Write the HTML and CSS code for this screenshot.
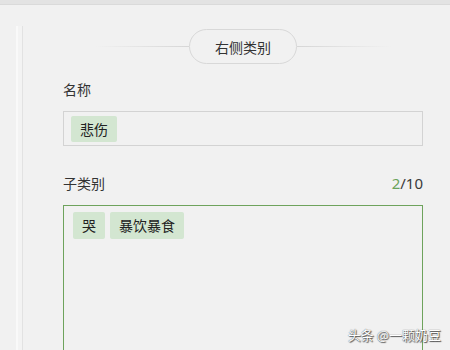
FILE: index.html
```html
<!DOCTYPE html>
<html lang="zh">
<head>
<meta charset="utf-8">
<link rel="stylesheet" href="styles.css">
</head>
<body>
<div class="topbar"></div>
<div class="page">
  <div class="rail"></div>
  <div class="panel">
    <div class="title-row">
      <span class="line line-left"></span>
      <span class="pill">右侧类别</span>
      <span class="line line-right"></span>
    </div>
    <div class="label">名称</div>
    <div class="box box-name">
      <span class="tag">悲伤</span>
    </div>
    <div class="label label-row">
      <span>子类别</span>
      <span class="count"><span class="count-num">2</span>/10</span>
    </div>
    <div class="box box-sub">
      <span class="tag">哭</span>
      <span class="tag">暴饮暴食</span>
    </div>
  </div>
</div>
<div class="watermark">头条 @一颗奶豆</div>
</body>
</html>
```
FILE: styles.css
```css
html, body {
  margin: 0;
  padding: 0;
  background: #f1f1f1;
  width: 450px;
  height: 350px;
  overflow: hidden;
  font-family: "Noto Sans CJK SC", "Noto Sans", sans-serif;
  color: #333;
}
.topbar {
  height: 4px;
  background: #e3e3e3;
  border-bottom: 1px solid #dadada;
}
.page {
  display: flex;
  padding-top: 21px;
  height: 330px;
}
.rail {
  margin-left: 16px;
  width: 4px;
  border-left: 2px solid #f9f9f9;
  border-right: 1px solid #e2e2e2;
  background: #f3f3f3;
}
.panel {
  margin-left: 40px;
  width: 360px;
  padding-top: 3px;
}
.title-row {
  display: flex;
  align-items: center;
  height: 35px;
}
.line {
  flex: 1;
  height: 1px;
}
.line-left {
  margin-left: 32px;
  background: linear-gradient(to right, rgba(210,210,210,0), #d6d6d6);
}
.line-right {
  margin-right: 32px;
  background: linear-gradient(to left, rgba(210,210,210,0), #d6d6d6);
}
.pill {
  box-sizing: border-box;
  width: 108px;
  height: 35px;
  border: 1px solid #d8d8d8;
  border-radius: 18px;
  display: flex;
  align-items: center;
  justify-content: center;
  font-size: 14px;
  color: #333;
}
.label {
  margin-top: 16px;
  font-size: 14px;
  line-height: 18px;
  color: #333;
}
.label-row {
  margin-top: 28px;
  display: flex;
  justify-content: space-between;
}
.count {
  font-family: "Noto Sans", "DejaVu Sans", sans-serif;
  font-size: 15px;
  font-weight: 400;
  color: #3a3a3a;
}
.count-num {
  color: #6aa35a;
}
.box {
  box-sizing: border-box;
  width: 360px;
  margin-top: 13px;
  display: flex;
  flex-wrap: wrap;
  align-items: flex-start;
  gap: 5px;
}
.box-name {
  height: 35px;
  border: 1px solid #d3d3d3;
  padding: 4px 7px;
}
.box-sub {
  height: 160px;
  border: 1px solid #6ea35c;
  padding: 6px 9px;
}
.tag {
  background: #d3e6d1;
  border-radius: 2px;
  padding: 0 9px;
  height: 26px;
  line-height: 26px;
  font-size: 14px;
  color: #222;
}
.box-sub .tag {
  height: 27px;
  line-height: 27px;
}
.watermark {
  position: absolute;
  right: 9px;
  bottom: 6px;
  font-size: 13px;
  color: #fff;
  text-shadow: 0 0 1px #333, 1px 1px 1px #555;
}
```
